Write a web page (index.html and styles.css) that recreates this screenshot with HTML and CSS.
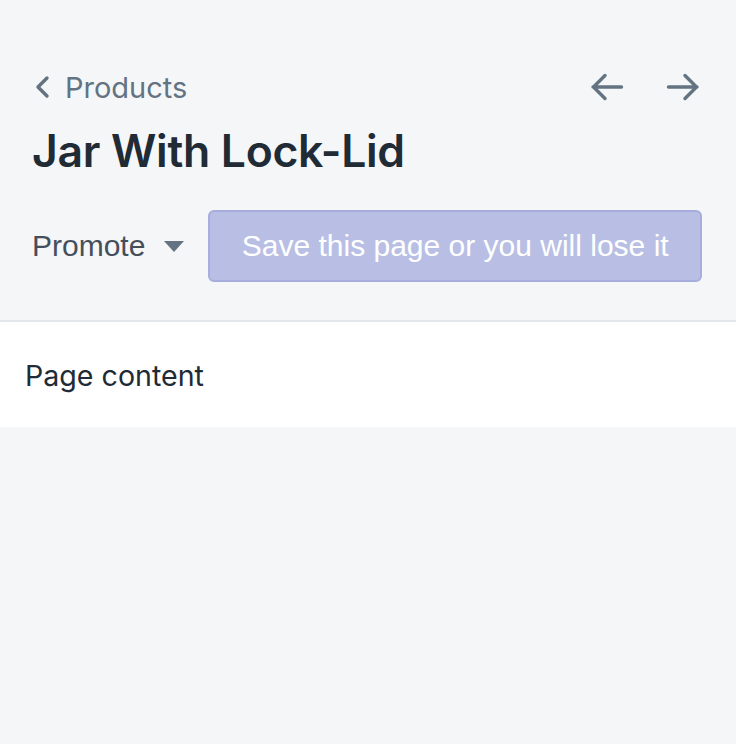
FILE: index.html
```html
<!DOCTYPE html>
<html lang="en">
<head>
<meta charset="utf-8">
<title>Jar With Lock-Lid</title>
<link rel="stylesheet" href="styles.css">
</head>
<body>
<div class="header">
  <div class="nav-row">
    <a class="breadcrumb" href="#">
      <svg class="chevron" width="16" height="24" viewBox="0 0 16 24"><path d="M13 3 L4 12 L13 21" fill="none" stroke="#637381" stroke-width="3.4" stroke-linecap="round" stroke-linejoin="round"/></svg>
      <span>Products</span>
    </a>
    <div class="pager">
      <svg width="34" height="28" viewBox="0 0 34 28"><path d="M31.5 14 H3 M15 2.5 L3.5 14 L15 25.5" fill="none" stroke="#637381" stroke-width="3.4" stroke-linecap="round" stroke-linejoin="round"/></svg>
      <svg width="34" height="28" viewBox="0 0 34 28"><path d="M2.5 14 H31 M19 2.5 L30.5 14 L19 25.5" fill="none" stroke="#637381" stroke-width="3.4" stroke-linecap="round" stroke-linejoin="round"/></svg>
    </div>
  </div>
  <h1 class="title">Jar With Lock-Lid</h1>
  <div class="actions">
    <button class="promote" type="button">Promote<span class="caret"></span></button>
    <button class="save" type="button" disabled>Save this page or you will lose it</button>
  </div>
</div>
<div class="card">Page content</div>
</body>
</html>
```

FILE: styles.css
```css
html, body {
  margin: 0;
  background: #f4f6f8;
}
body {
  font-family: Inter, "Noto Sans", sans-serif;
  color: #212b36;
}
.header {
  padding: 64px 34px 0 32px;
}
.nav-row {
  display: flex;
  align-items: center;
  justify-content: space-between;
  height: 46px;
}
.breadcrumb {
  display: flex;
  align-items: center;
  gap: 15px;
  color: #637381;
  text-decoration: none;
  font-size: 29px;
}
.chevron {
  margin-left: 2px;
}
.pager {
  display: flex;
  gap: 42px;
  margin-right: 2px;
}
.title {
  margin: 16px 0 0 0;
  font-size: 44.5px;
  line-height: 50px;
  font-weight: 600;
  letter-spacing: -0.3px;
  color: #212b36;
}
.actions {
  display: flex;
  align-items: center;
  margin-top: 34px;
  height: 72px;
}
.promote {
  display: flex;
  align-items: center;
  background: none;
  border: 0;
  padding: 0 24px 0 0;
  font-family: "Liberation Sans", Arial, sans-serif;
  font-size: 30px;
  color: #454f5b;
}
.caret {
  width: 0;
  height: 0;
  margin-left: 19px;
  border-left: 10px solid transparent;
  border-right: 10px solid transparent;
  border-top: 11px solid #637381;
}
.save {
  flex: 1;
  height: 72px;
  background: #b9bfe4;
  border: 2px solid #a7aedd;
  border-radius: 6px;
  color: #ffffff;
  font-family: "Liberation Sans", Arial, sans-serif;
  font-size: 30px;
}
.card {
  margin-top: 38px;
  background: #ffffff;
  border-top: 2px solid #e3e6ea;
  box-shadow: 0 2px 2px rgba(63, 63, 68, 0.15);
  height: 104px;
  display: flex;
  align-items: center;
  padding: 1px 25px 0;
  font-size: 28.6px;
  color: #212b36;
}
```
